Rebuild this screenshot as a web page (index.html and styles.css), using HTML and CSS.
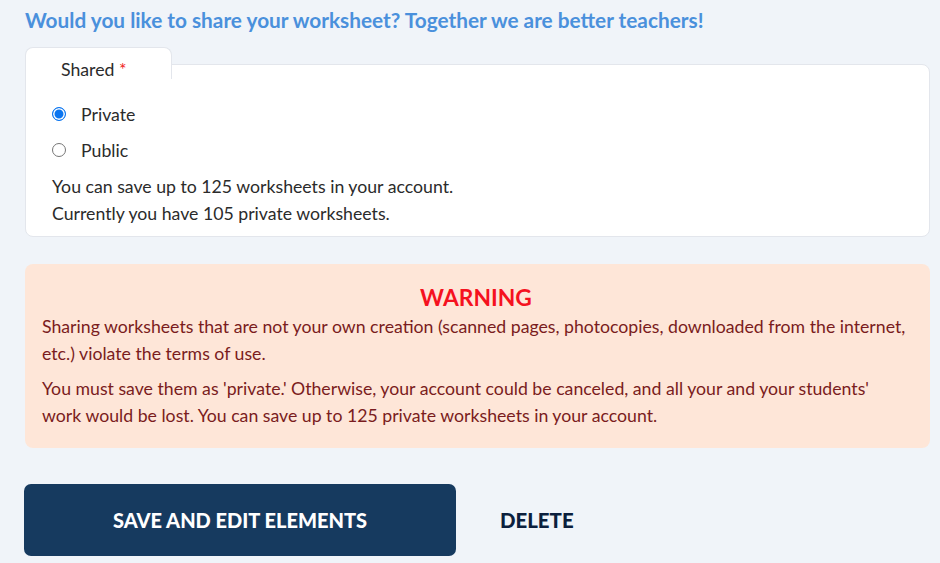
FILE: index.html
```html
<!DOCTYPE html>
<html lang="en">
<head>
    <meta charset="UTF-8">
    <meta name="viewport" content="width=device-width, initial-scale=1.0">
    <title>Share worksheet</title>
    <link rel="stylesheet" href="styles.css">
</head>
<body>
    <div class="page">
        <h2 class="share-title">Would you like to share your worksheet? Together we are better teachers!</h2>

        <div class="field">
            <div class="field-tab">
                <span class="field-label">Shared <span class="required">*</span></span>
            </div>
            <div class="field-body">
                <label class="radio-row">
                    <input type="radio" name="shared" value="private" checked>
                    <span>Private</span>
                </label>
                <label class="radio-row">
                    <input type="radio" name="shared" value="public">
                    <span>Public</span>
                </label>
                <p class="field-note">You can save up to 125 worksheets in your account.<br>Currently you have 105 private worksheets.</p>
            </div>
        </div>

        <div class="warning">
            <h3>WARNING</h3>
            <p>Sharing worksheets that are not your own creation (scanned pages, photocopies, downloaded from the internet, etc.) violate the terms of use.</p>
            <p>You must save them as 'private.' Otherwise, your account could be canceled, and all your and your students' work would be lost. You can save up to 125 private worksheets in your account.</p>
        </div>

        <div class="actions">
            <button class="btn-save">SAVE AND EDIT ELEMENTS</button>
            <button class="btn-delete">DELETE</button>
        </div>
    </div>
</body>
</html>
```

FILE: styles.css
```css
body {
    font-family: Lato, "Open Sans", Arial, sans-serif;
    margin: 0;
    padding: 0;
    background-color: #f0f4f9;
    color: #2b2b2b;
}

.page {
    padding: 8px 10px 0 25px;
}

.share-title {
    margin: 0;
    font-size: 20.8px;
    line-height: 24px;
    font-weight: 700;
    color: #4a90dc;
}

/* tabbed field card */
.field {
    margin-top: 15px;
}

.field-tab {
    position: relative;
    z-index: 1;
    width: 147px;
    height: 32px;
    padding-top: 13px;
    box-sizing: border-box;
    margin-bottom: -15px;
    background-color: #fff;
    border: 1px solid #e3e6ec;
    border-bottom: none;
    border-radius: 8px 8px 0 0;
}

.field-label {
    display: block;
    padding-left: 35px;
    font-size: 17.7px;
    line-height: 20px;
    margin-top: -1px;
}

.required {
    color: #f01a1a;
}

.field-body {
    background-color: #fff;
    border: 1px solid #e3e6ec;
    border-radius: 0 8px 8px 8px;
    padding: 31px 26px 9px 26px;
}

.radio-row {
    display: flex;
    align-items: center;
    height: 36px;
    font-size: 17.7px;
    cursor: pointer;
}

.radio-row input {
    appearance: none;
    box-sizing: border-box;
    width: 14px;
    height: 14px;
    margin: 0 15px 0 0;
    border: 1px solid #767676;
    border-radius: 50%;
    background-color: #fff;
    cursor: pointer;
}

.radio-row input:checked {
    border-color: #0a75f0;
    background-color: #0a75f0;
    box-shadow: inset 0 0 0 1.5px #fff;
}

.field-note {
    margin: 5px 0 0 0;
    font-size: 17.7px;
    line-height: 27px;
}

/* warning box */
.warning {
    margin-top: 27px;
    background-color: #fee6d8;
    border-radius: 8px;
    padding: 20px 20px 19px 17px;
    color: #7a1c20;
    font-size: 17.7px;
    line-height: 27px;
}

.warning h3 {
    margin: 0 0 3px 0;
    text-align: center;
    font-size: 22.8px;
    line-height: 26px;
    color: #f5121f;
}

.warning p {
    margin: 0;
}

.warning p + p {
    margin-top: 8px;
}

/* buttons */
.actions {
    display: flex;
    align-items: center;
    margin-top: 36px;
}

.btn-save {
    width: 432px;
    height: 72px;
    margin-left: -1px;
    border: none;
    border-radius: 7px;
    background-color: #163a5f;
    color: #fff;
    font-family: inherit;
    font-size: 20px;
    font-weight: 900;
    cursor: pointer;
}

.btn-delete {
    margin-left: 44px;
    padding: 0;
    border: none;
    background: none;
    color: #0c1f3d;
    font-family: inherit;
    font-size: 20.4px;
    font-weight: 900;
    cursor: pointer;
}
```
